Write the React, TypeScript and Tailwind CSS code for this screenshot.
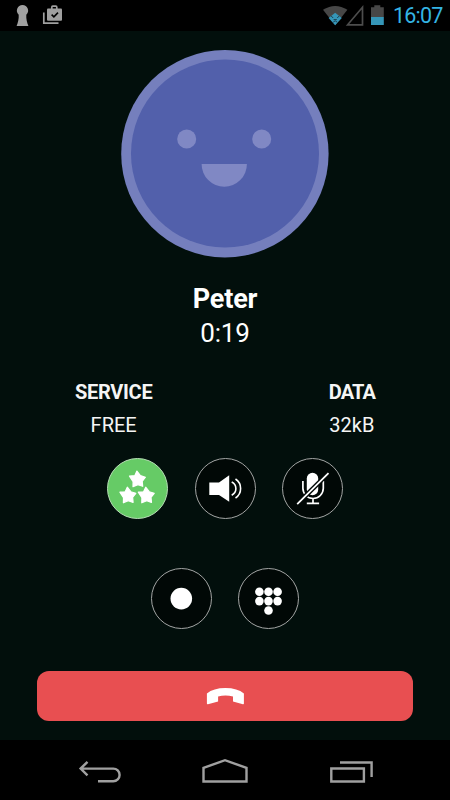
import type { ReactNode } from "react";

const STAR = "M-0.6 -8.3 L2.9 -3.8 L7.9 -2.2 L4.7 1.9 L5.2 6.9 L0.4 5.2 L-4.5 7.3 L-4.4 2.2 L-8 -3.3 L-2.7 -3.7 Z";

function RoundButton({ label, active = false, children }: { label: string; active?: boolean; children: ReactNode }) {
  return (
    <button
      aria-label={label}
      className={`flex size-[61px] items-center justify-center rounded-full border ${
        active ? "border-[#b5dcb4] bg-[#66cb66]" : "border-[#a3a5a4] bg-[#010806]"
      }`}
    >
      <svg viewBox="0 0 61 61" className="size-[61px] shrink-0" fill="white">
        {children}
      </svg>
    </button>
  );
}

function Info({ title, value, className }: { title: string; value: string; className: string }) {
  return (
    <div className={`flex flex-col items-center text-[20px] leading-[33px] text-[#f5f5f5] ${className}`}>
      <span className="font-bold">{title}</span>
      <span className="tracking-normal">{value}</span>
    </div>
  );
}

function StatusBar() {
  return (
    <header className="flex h-[31px] items-start bg-black">
      <svg width="225" height="31" viewBox="0 0 225 31">
        {/* keyhole */}
        <path d="M22.5 5a5.6 5.6 0 0 0-3.8 9.7c.3 4-.8 8-2.1 11.3h11.8c-1.3-3.3-2.4-7.3-2.1-11.3A5.6 5.6 0 0 0 22.5 5Z" fill="#a0a0a0" />
        {/* store bag */}
        <path d="M43.8 12.5v10.6h14.7" fill="none" stroke="#a0a0a0" strokeWidth="1.7" />
        <path d="M51.8 9V7.2q0-1 1-1h3q1 0 1 1V9" fill="none" stroke="#a0a0a0" strokeWidth="1.7" />
        <rect x="47" y="8.5" width="15" height="12.2" rx="1" fill="#a0a0a0" />
        <path d="m51.6 14.6 2.3 2.2 4.1-4.2" fill="none" stroke="#000" strokeWidth="1.6" />
      </svg>
      <svg width="168" height="31" viewBox="225 0 168 31">
        {/* wifi */}
        <path d="M323 9.8Q335.2 2 347.4 9.8L335.2 25.3Z" fill="#474747" />
        <path d="M328.6 18 335.2 12.8 341.8 18 335.2 25.3Z" fill="#3596b8" />
        <path d="M331.2 16l2 2M339.2 16l-2 2M333.6 19.6h3.2M333.2 22.2l2-1.4 2 1.4" fill="none" stroke="#1d3f50" strokeWidth="1" />
        {/* signal */}
        <path d="M347.6 24.8h14.9V7.3Z" fill="none" stroke="#4d4d4d" strokeWidth="1.7" />
        {/* battery */}
        <path d="M371 7.3h3.3V5.2h6v2.1h3.5v9.9H371Z" fill="#474747" />
        <rect x="371" y="17" width="12.8" height="8" fill="#3596b8" />
      </svg>
      <span className="text-[21.5px] leading-[32px] tracking-[-0.8px] text-[#34b4e4]">16:07</span>
    </header>
  );
}

function Avatar() {
  return (
    <svg viewBox="0 0 208 208" className="mt-[19px] size-[208px] shrink-0">
      <circle cx="103.9" cy="103.7" r="103.7" fill="#757fbd" />
      <circle cx="104" cy="103.5" r="94" fill="#5260ab" />
      <g fill="#8088c4">
        <circle cx="65.7" cy="89" r="9.5" />
        <circle cx="140.7" cy="89" r="9.5" />
        <path d="M80.6 114h45.3a22.65 22.8 0 0 1-45.3 0Z" />
      </g>
    </svg>
  );
}

function NavBar() {
  return (
    <nav className="flex h-[60px] justify-center gap-[77px] bg-black">
      <svg width="48" height="60" fill="none" stroke="#a0a0a0" strokeWidth="2.4">
        <path d="M11.5 21.8 4.6 28.6 11.5 35.4M5 28.6H37.3a6.3 6.3 0 0 1 0 12.6H22" />
      </svg>
      <svg width="48" height="60" fill="none" stroke="#a0a0a0" strokeWidth="2.4">
        <path d="M2.5 27.9 24 20.2 45.5 27.9V41.5H2.5Z" />
      </svg>
      <svg width="48" height="60" fill="none" stroke="#a0a0a0" strokeWidth="2.4">
        <path d="M5.3 28.5H37.9V41.5H5.3ZM14 22.5H45.6V37" />
      </svg>
    </nav>
  );
}

export default function App() {
  return (
    <div className="flex h-[800px] w-[450px] flex-col overflow-hidden bg-[#020f0c] font-[Roboto,sans-serif] text-white">
      <StatusBar />
      <main className="flex h-[709px] flex-col items-center">
        <Avatar />
        <h1 className="mt-[24px] text-[27px] leading-[34px] font-bold tracking-[-0.15px]">Peter</h1>
        <p className="text-[26px] leading-[34px] tracking-[-0.2px]">0:19</p>
        <section className="mt-[26px] flex w-full justify-between px-[75px]">
          <Info title="SERVICE" value="FREE" className="tracking-[-0.3px]" />
          <Info title="DATA" value="32kB" className="tracking-[-0.9px]" />
        </section>
        <div className="mt-[16px] flex gap-[26.4px]">
          <RoundButton label="Quality" active>
            <g stroke="white" strokeWidth="1.2" strokeLinejoin="round">
              <path d={STAR} transform="translate(30.5 21.4)" />
              <path d={STAR} transform="translate(20.9 37.5)" />
              <path d={STAR} transform="translate(39.3 37.5)" />
            </g>
          </RoundButton>
          <RoundButton label="Speaker">
            <path d="M14.3 24.5H24L34.2 17.3V43.8L24 37H14.3Z" />
            <path d="M36.7 24a7.3 7.3 0 0 1 0 13.2M40.5 21a11.4 11.4 0 0 1 0 19" fill="none" stroke="white" strokeWidth="1.6" />
          </RoundButton>
          <RoundButton label="Mute">
            <rect x="24.8" y="14.8" width="11.4" height="22.4" rx="5.7" />
            <path d="M20.9 23v7.3a9.9 9.9 0 0 0 20.4 0V23M31 40.5v4.8M24.8 45.3h12.3" fill="none" stroke="white" strokeWidth="1.7" />
            <path d="M15.2 46.2 46.5 15.2" stroke="#010806" strokeWidth="4.6" />
            <path d="M15.2 46.2 46.5 15.2" stroke="white" strokeWidth="1.8" />
          </RoundButton>
        </div>
        <div className="mt-[49px] flex gap-[26.4px]">
          <RoundButton label="Record">
            <circle cx="30.3" cy="30.6" r="10.8" />
          </RoundButton>
          <RoundButton label="Keypad">
            {[21.4, 30.5, 39.6].map((x) => (
              <g key={x}>
                <circle cx={x} cy="23.7" r="4.3" />
                <circle cx={x} cy="33.1" r="4.3" />
              </g>
            ))}
            <circle cx="30.5" cy="42.5" r="4.3" />
          </RoundButton>
        </div>
        <button aria-label="Hang up" className="mt-[42px] flex h-[50.4px] w-[376px] justify-center rounded-[12px] bg-[#e84f51]">
          <svg width="38" height="50" viewBox="-0.4 0 38 50" fill="white">
            <path d="M.5 22.5Q7 17 19 17T37.5 22.5V32.6q0 1-1 .7L26.6 30.4V25.6Q19 23.4 11.7 25.6V30.4L1.6 33.3q-1.1.3-1.1-.7Z" />
          </svg>
        </button>
      </main>
      <NavBar />
    </div>
  );
}
